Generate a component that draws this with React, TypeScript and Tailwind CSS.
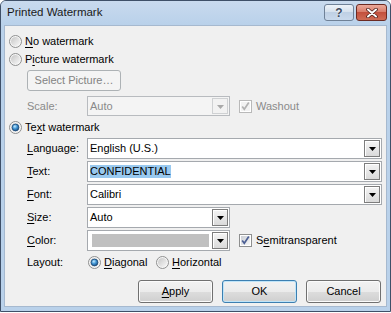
import type { ReactNode } from 'react'

const ui = "font-['Liberation_Sans',Arial,sans-serif] text-[11px] leading-none"

function U({ children }: { children: ReactNode }) {
  return <span className="underline underline-offset-[2px]">{children}</span>
}

function Radio({ checked = false }: { checked?: boolean }) {
  return (
    <svg width="13" height="13" viewBox="0 0 13 13" className="shrink-0">
      <defs>
        <linearGradient id="rbg" x1="0" y1="0" x2="1" y2="1">
          <stop offset="0" stopColor="#c6c6c6" />
          <stop offset="1" stopColor="#f8f8f8" />
        </linearGradient>
        <radialGradient id="rdot" cx="0.4" cy="0.35" r="0.75">
          <stop offset="0" stopColor="#c4ecff" />
          <stop offset="0.45" stopColor="#3f94d4" />
          <stop offset="1" stopColor="#173f6c" />
        </radialGradient>
      </defs>
      <circle cx="6.5" cy="6.5" r="6" fill="#f6f6f6" stroke="#8e8f8f" />
      <circle cx="6.5" cy="6.5" r="4.5" fill="url(#rbg)" />
      {checked && <circle cx="6.5" cy="6.5" r="3.4" fill="url(#rdot)" stroke="#1c4a78" strokeWidth="0.8" />}
    </svg>
  )
}

function Check({ disabled = false }: { disabled?: boolean }) {
  return (
    <svg width="13" height="13" viewBox="0 0 13 13" className="shrink-0">
      <defs>
        <linearGradient id="cbg" x1="0" y1="0" x2="1" y2="1">
          <stop offset="0" stopColor="#cbcfd5" />
          <stop offset="1" stopColor="#f7f7f7" />
        </linearGradient>
      </defs>
      <rect x="0.5" y="0.5" width="12" height="12" fill="#fff" stroke={disabled ? '#b9b9b9' : '#8e8f8f'} />
      <rect x="2" y="2" width="9" height="9" fill={disabled ? '#f2f2f2' : 'url(#cbg)'} />
      <path d="M3.2 6.4 L5.3 9.2 L9.8 2.6" fill="none" stroke={disabled ? '#b2b2b2' : '#4c5f94'} strokeWidth="1.7" />
    </svg>
  )
}

function DropBtn({ disabled = false }: { disabled?: boolean }) {
  return (
    <div
      className={`my-px mr-px flex w-[16px] shrink-0 items-center justify-center self-stretch border ${
        disabled ? 'border-[#cfd1d3] bg-[#f2f2f2]' : 'border-[#7d7d7d] bg-[linear-gradient(to_bottom,#f4f4f4,#dadada)] shadow-[inset_1px_1px_0_#ffffff]'
      }`}
    >
      <svg width="7" height="4" viewBox="0 0 7 4" className="mt-px">
        <path d="M0 0h7L3.5 4z" fill={disabled ? '#a9a9a9' : '#000'} />
      </svg>
    </div>
  )
}

function Combo({ w, h = 'h-[21px]', disabled = false, children }: { w: string; h?: string; disabled?: boolean; children: ReactNode }) {
  return (
    <div
      className={`flex ${h} ${w} items-stretch border ${
        disabled ? 'border-[#b8bbbf] bg-[#f4f4f4] text-[#8a8a8a]' : 'border-[#a5a9ae] bg-white text-black'
      }`}
    >
      <div className="flex min-w-0 flex-1 items-center pl-[2px]">{children}</div>
      <DropBtn disabled={disabled} />
    </div>
  )
}

function Btn({ children, primary = false }: { children: ReactNode; primary?: boolean }) {
  return (
    <div
      className={`flex h-[23px] w-[75px] items-center justify-center rounded-[3px] border bg-[linear-gradient(to_bottom,#f2f2f2_0%,#ebebeb_50%,#dddddd_50%,#cfcfcf_100%)] ${
        primary ? 'border-[#3c7fb1] shadow-[inset_0_0_0_1px_#bfe4f8]' : 'border-[#707070] shadow-[inset_0_0_0_1px_#fbfbfb]'
      }`}
    >
      {children}
    </div>
  )
}

function Label({ children, gray = false }: { children: ReactNode; gray?: boolean }) {
  return <div className={`w-[60px] shrink-0 ${gray ? 'text-[#8a8a8a]' : ''}`}>{children}</div>
}

export default function App() {
  return (
    <div className={`${ui} h-[313px] w-[391px] bg-white text-black`}>
      <div className="flex h-[312px] w-[391px] flex-col rounded-t-[6px] border border-[#3f5068] bg-[#b9d1ea]">
        {/* title bar */}
        <div className="flex h-[24px] shrink-0 items-center justify-between rounded-t-[5px] bg-[linear-gradient(to_bottom,#c9daee,#b9d1ea)] pl-[6px] pr-[3px]">
          <span className="text-[11.5px] text-[#1a1a1a]">Printed Watermark</span>
          <div className="flex gap-[2px] self-start pt-[3px]">
            <div className="flex h-[17px] w-[30px] items-center justify-center rounded-[3px] border border-[#6f8197] bg-[linear-gradient(to_bottom,#eef3f9_0%,#d3dfec_50%,#bfd0e4_50%,#c9d9ec_100%)]">
              <span className="text-[12px] font-bold text-[#3d4b60] [text-shadow:0_0_2px_#ffffff]">?</span>
            </div>
            <div className="flex h-[17px] w-[31px] items-center justify-center rounded-[3px] border border-[#6b2a22] bg-[linear-gradient(to_bottom,#eaa99b_0%,#d77966_50%,#c3503d_50%,#cf6c55_100%)]">
              <svg width="12" height="10" viewBox="0 0 12 10">
                <path d="M2 1.5 L10 8.5 M10 1.5 L2 8.5" stroke="#4a1d18" strokeWidth="3.6" strokeLinecap="round" />
                <path d="M2 1.5 L10 8.5 M10 1.5 L2 8.5" stroke="#ffffff" strokeWidth="2" strokeLinecap="round" />
              </svg>
            </div>
          </div>
        </div>

        {/* client area */}
        <div className="mx-[3px] mb-[4px] flex flex-1 flex-col border border-[#a6b9cf] bg-[#f0f0f0] px-[4px] pt-[6px]">
          <div className="flex h-[18px] items-center gap-[3px]">
            <Radio />
            <span>
              <U>N</U>o watermark
            </span>
          </div>
          <div className="flex h-[18px] items-center gap-[3px]">
            <Radio />
            <span>
              P<U>i</U>cture watermark
            </span>
          </div>
          <div className="ml-[18px] mt-[2px] flex h-[21px] w-[94px] items-center justify-center rounded-[3px] border border-[#adb2b5] bg-[#f4f4f4] text-[#838383]">
            Select Picture…
          </div>
          <div className="ml-[18px] mt-[5px] flex items-center">
            <Label gray>Scale:</Label>
            <Combo w="w-[143px]" h="h-[20px]" disabled>
              Auto
            </Combo>
            <div className="ml-[9px] flex items-center gap-[4px] text-[#8a8a8a]">
              <Check disabled />
              <span>Washout</span>
            </div>
          </div>
          <div className="mt-[2px] flex h-[18px] items-center gap-[3px]">
            <Radio checked />
            <span>
              Te<U>x</U>t watermark
            </span>
          </div>

          <div className="ml-[18px] mt-[2px] flex flex-col gap-[2px]">
            <div className="flex items-center">
              <Label>
                <U>L</U>anguage:
              </Label>
              <Combo w="flex-1">English (U.S.)</Combo>
            </div>
            <div className="flex items-center">
              <Label>
                <U>T</U>ext:
              </Label>
              <Combo w="flex-1">
                <span className="bg-[#99c9ef] py-[1px]">CONFIDENTIAL</span>
              </Combo>
            </div>
            <div className="flex items-center">
              <Label>
                <U>F</U>ont:
              </Label>
              <Combo w="flex-1">Calibri</Combo>
            </div>
            <div className="flex items-center">
              <Label>
                <U>S</U>ize:
              </Label>
              <Combo w="w-[143px]">Auto</Combo>
            </div>
            <div className="flex items-center">
              <Label>
                <U>C</U>olor:
              </Label>
              <Combo w="w-[143px]">
                <div className="ml-[2px] mr-[3px] h-[13px] flex-1 bg-[#c0c0c0]" />
              </Combo>
              <div className="ml-[9px] flex items-center gap-[4px]">
                <Check />
                <span>
                  S<U>e</U>mitransparent
                </span>
              </div>
            </div>
          </div>

          <div className="ml-[18px] mt-[2px] flex h-[18px] items-center">
            <Label>Layout:</Label>
            <div className="ml-px flex w-[68px] items-center gap-[3px]">
              <Radio checked />
              <span>
                <U>D</U>iagonal
              </span>
            </div>
            <div className="flex items-center gap-[3px]">
              <Radio />
              <span>
                <U>H</U>orizontal
              </span>
            </div>
          </div>

          <div className="mt-[9px] flex justify-end gap-[9px] pr-[1px]">
            <Btn>
              <U>A</U>pply
            </Btn>
            <Btn primary>OK</Btn>
            <Btn>Cancel</Btn>
          </div>
        </div>
      </div>
    </div>
  )
}
